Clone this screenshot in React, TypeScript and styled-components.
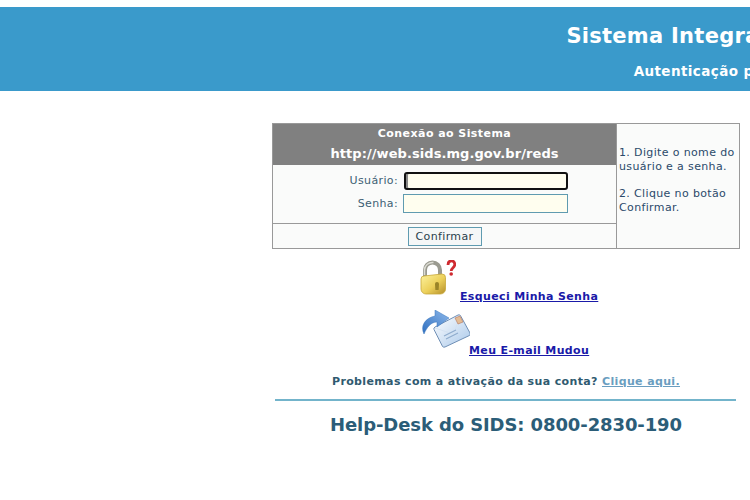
import styled, { createGlobalStyle } from "styled-components"

const GlobalStyle = createGlobalStyle`
    html, body {
        margin: 0;
        padding: 0;
        background: #fff;
        overflow: hidden;
    }
    body {
        font-family: "DejaVu Sans", Verdana, sans-serif;
        font-size: 11px;
        letter-spacing: 0.36px;
        color: #2c5a72;
    }
`

const Page = styled.div`
    width: 750px;
    height: 500px;
    padding-top: 7px;
    box-sizing: border-box;
    overflow: hidden;
`

const Header = styled.header`
    width: 750px;
    height: 84px;
    background: #3a9acb;
    overflow: hidden;
`

const HeaderInner = styled.div`
    width: 1564px;
    padding-top: 16px;
    text-align: center;
    color: #fff;
    font-weight: 700;
    white-space: nowrap;
`

const Title = styled.h1`
    margin: 0;
    font-size: 21px;
    line-height: 26px;
    letter-spacing: 0.27px;
`

const Subtitle = styled.h2`
    margin: 14px 0 0;
    font-size: 13.5px;
    line-height: 16px;
    letter-spacing: 0.4px;
`

const Content = styled.main`
    width: 468px;
    margin: 32px 0 0 272px;
    display: flex;
    flex-direction: column;
    align-items: center;
`

const LoginBox = styled.section`
    width: 468px;
    height: 126px;
    box-sizing: border-box;
    display: grid;
    grid-template-columns: 344px 1fr;
    border: 1px solid #999;
    background: #fafbfa;
`

const LoginMain = styled.div`
    display: flex;
    flex-direction: column;
    border-right: 1px solid #999;
`

const BoxHeading = styled.div<{ $tall?: boolean }>`
    height: ${p => (p.$tall ? 22 : 19)}px;
    line-height: ${p => (p.$tall ? 22 : 19)}px;
    background: #808080;
    color: #fff;
    font-weight: 700;
    font-size: ${p => (p.$tall ? 13 : 11)}px;
    letter-spacing: ${p => (p.$tall ? 0.07 : 0.44)}px;
    text-align: center;
`

const FormArea = styled.div`
    height: 59px;
    box-sizing: border-box;
    padding-top: 6px;
    display: grid;
    grid-template-columns: 125px 165px;
    grid-auto-rows: 19px;
    column-gap: 5px;
    row-gap: 4px;
    align-items: center;
    border-bottom: 1px solid #999;
`

const FieldLabel = styled.label`
    text-align: right;
    color: #3d5f74;
`

const TextInput = styled.input<{ $focused?: boolean }>`
    width: 165px;
    height: 19px;
    box-sizing: border-box;
    padding: 0 2px;
    background: #fffeef;
    border: 1px solid #5f9bb0;
    outline: none;
    ${p => p.$focused && `
        width: 164px;
        height: 18px;
        margin-left: 1px;
        border: 2px solid #111;
        border-radius: 3px;
        box-shadow: inset 2px 0 0 #888;
    `}
`

const FormFooter = styled.div`
    flex: 1;
    display: flex;
    align-items: center;
    justify-content: center;
`

const SubmitButton = styled.button`
    width: 74px;
    height: 19px;
    padding: 0;
    font-family: inherit;
    font-size: 11px;
    letter-spacing: inherit;
    color: #2a3f4c;
    background: #f5f7f7;
    border: 1px solid #5f9bb0;
`

const Hints = styled.aside`
    padding: 22px 0 0 2px;
    color: #2b4a6a;
    line-height: 13.5px;
`

const Hint = styled.p`
    margin: 0 0 14px;
`

const HelpLink = styled.div`
    display: flex;
    align-items: flex-start;
    width: 100%;
    box-sizing: border-box;
    padding-left: 148px;
`

const ForgotRow = styled(HelpLink)`
    margin-top: 11px;
    height: 50px;
`

const MailRow = styled(HelpLink)`
    height: 65px;
`

const Icon = styled.svg`
    flex: none;
    filter: blur(0.35px);
`

const BlueLink = styled.a<{ $offset: number; $shift: number }>`
    margin: ${p => p.$offset}px 0 0 ${p => p.$shift}px;
    color: #1a1aa8;
    font-weight: 700;
    text-decoration: underline;
    white-space: nowrap;
`

const ActivationLine = styled.p`
    margin: 0;
    font-weight: 700;
    color: #2f5a70;
    line-height: 14px;
`

const SoftLink = styled.a`
    color: #6a9ec0;
    text-decoration: underline;
`

const Divider = styled.hr`
    width: 461px;
    margin: 10px 0 0 -1px;
    border: 0;
    border-top: 2px solid #73b4cb;
`

const HelpDesk = styled.h3`
    margin: 13px 0 0;
    font-size: 18px;
    line-height: 22px;
    font-weight: 700;
    letter-spacing: -0.1px;
    color: #2b5d78;
`

const LockIcon = () => (
    <Icon width="36" height="38" viewBox="0 0 36 38">
        <defs>
            <linearGradient id="lockBody" x1="0" y1="0" x2="1" y2="1">
                <stop offset="0" stopColor="#fdf3a0" />
                <stop offset="0.55" stopColor="#ecd05a" />
                <stop offset="1" stopColor="#b48e2a" />
            </linearGradient>
        </defs>
        <path d="M5 18V10a7.500 7.500 0 0 1 15 0v8" fill="none" stroke="#9a9a90" strokeWidth="4" />
        <path d="M4.500 15V10a8 8 0 0 1 9-7.500" fill="none" stroke="#dcdcd4" strokeWidth="1.500" />
        <path d="M4 16 22 14a3.500 3.500 0 0 1 3.500 3.500V29a5 5 0 0 1-5 5H6a5 5 0 0 1-5-5V19a3 3 0 0 1 3-3z" fill="url(#lockBody)" stroke="#c8a83a" strokeWidth="0.800" />
        <path d="M15 24a2 2 0 0 1 4 0l-.4 6h-3.200z" fill="#9a8428" />
        <path d="M28 5c0-5.500 6.800-5.500 6.800-.5 0 3.200-3.600 3.200-3.600 6.500" fill="none" stroke="#cf2a30" strokeWidth="2.800" />
        <circle cx="31.200" cy="14" r="1.800" fill="#cf2a30" />
    </Icon>
)

const MailIcon = () => (
    <Icon width="50" height="40" viewBox="0 0 50 40">
        <defs>
            <linearGradient id="mailBody" x1="0" y1="0" x2="1" y2="1">
                <stop offset="0" stopColor="#ffffff" />
                <stop offset="1" stopColor="#a9c8ea" />
            </linearGradient>
            <linearGradient id="mailArrow" x1="0" y1="1" x2="1" y2="0">
                <stop offset="0" stopColor="#2f6fc0" />
                <stop offset="1" stopColor="#8db8ea" />
            </linearGradient>
        </defs>
        <path d="M15 17 38 5a2 2 0 0 1 2.700 1L50 23a2 2 0 0 1-1 2.700L25 37a2 2 0 0 1-2.700-1L14 19.500a2 2 0 0 1 1-2.500z" fill="url(#mailBody)" stroke="#6f8fb5" />
        <path d="M15 18 33 24 41 6" fill="none" stroke="#d2e0f0" strokeWidth="0.800" />
        <path d="M24 26 36 20M26 29 38 23" stroke="#8faccd" strokeWidth="1.100" />
        <path d="M35 8 40 6 43 12 38 14z" fill="#e3bd95" stroke="#b5745a" strokeWidth="0.600" />
        <path d="M4 24C0 16 5 8 15 6V0L29 8 17 17V12C11 12 7 17 4 24z" fill="url(#mailArrow)" stroke="#3a76bd" strokeWidth="0.500" />
    </Icon>
)

export default function App() {
    return (
        <Page>
            <GlobalStyle />
            <Header>
                <HeaderInner>
                    <Title>Sistema Integrado de Defesa Social</Title>
                    <Subtitle>Autenticação para acesso ao sistema</Subtitle>
                </HeaderInner>
            </Header>
            <Content>
                <LoginBox>
                    <LoginMain>
                        <BoxHeading>Conexão ao Sistema</BoxHeading>
                        <BoxHeading $tall>http://web.sids.mg.gov.br/reds</BoxHeading>
                        <FormArea>
                            <FieldLabel>Usuário:</FieldLabel>
                            <TextInput $focused />
                            <FieldLabel>Senha:</FieldLabel>
                            <TextInput type="password" />
                        </FormArea>
                        <FormFooter>
                            <SubmitButton>Confirmar</SubmitButton>
                        </FormFooter>
                    </LoginMain>
                    <Hints>
                        <Hint>1. Digite o nome do usuário e a senha.</Hint>
                        <Hint>2. Clique no botão Confirmar.</Hint>
                    </Hints>
                </LoginBox>
                <ForgotRow>
                    <LockIcon />
                    <BlueLink href="#" $offset={30} $shift={4}>Esqueci Minha Senha</BlueLink>
                </ForgotRow>
                <MailRow>
                    <MailIcon />
                    <BlueLink href="#" $offset={34} $shift={-1}>Meu E-mail Mudou</BlueLink>
                </MailRow>
                <ActivationLine>
                    Problemas com a ativação da sua conta? <SoftLink href="#">Clique aqui.</SoftLink>
                </ActivationLine>
                <Divider />
                <HelpDesk>Help-Desk do SIDS: 0800-2830-190</HelpDesk>
            </Content>
        </Page>
    )
}
